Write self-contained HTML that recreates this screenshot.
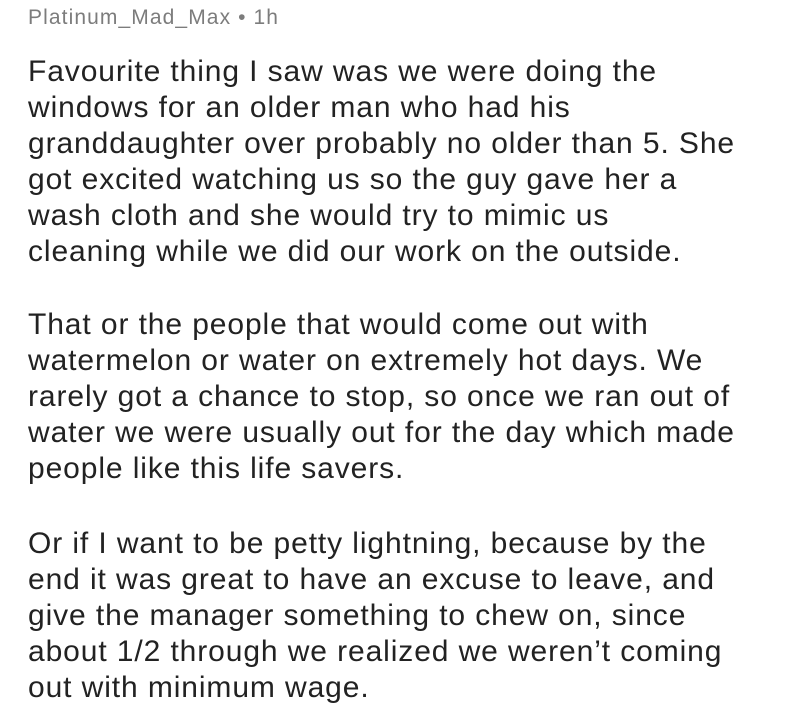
<!DOCTYPE html>
<html><head><style>
body{margin:0;width:800px;height:722px;background:#fff;overflow:hidden;font-family:"Liberation Sans",sans-serif}
.h{position:absolute;left:28px;top:5px;font-size:21px;letter-spacing:1.1px;color:#7c7c7c;line-height:26px}
.p{position:absolute;left:28px;font-size:30px;letter-spacing:0.9px;line-height:36px;color:#222;white-space:nowrap}
</style></head><body>
<div class="h">Platinum_Mad_Max • 1h</div>
<div class="p" style="top:54px">Favourite thing I saw was we were doing the<br>windows for an older man who had his<br>granddaughter over probably no older than 5. She<br>got excited watching us so the guy gave her a<br>wash cloth and she would try to mimic us<br>cleaning while we did our work on the outside.</div>
<div class="p" style="top:307px">That or the people that would come out with<br>watermelon or water on extremely hot days. We<br>rarely got a chance to stop, so once we ran out of<br>water we were usually out for the day which made<br>people like this life savers.</div>
<div class="p" style="top:526px">Or if I want to be petty lightning, because by the<br>end it was great to have an excuse to leave, and<br>give the manager something to chew on, since<br>about 1/2 through we realized we weren’t coming<br>out with minimum wage.</div>
</body></html>
